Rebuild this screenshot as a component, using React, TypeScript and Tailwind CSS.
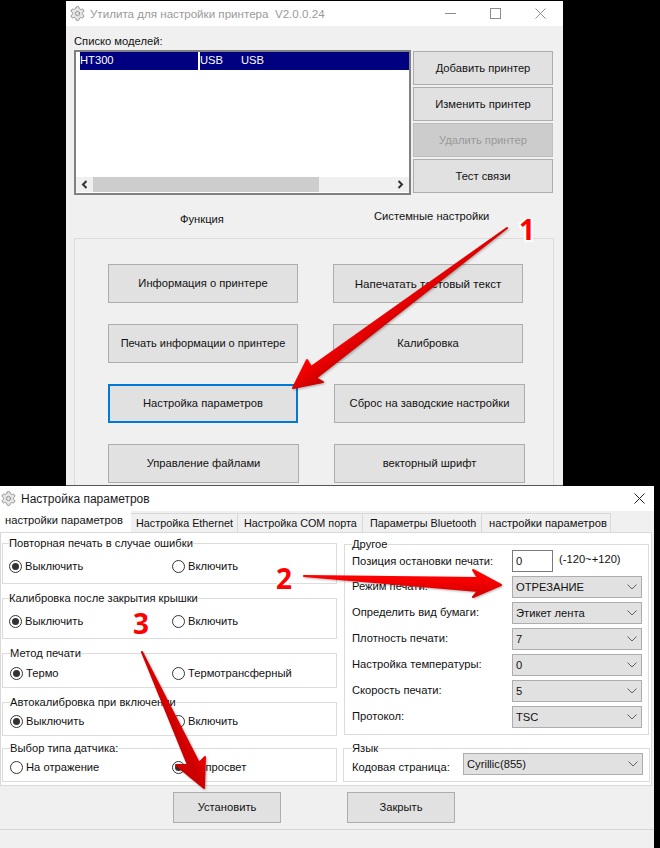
import { Settings } from "lucide-react"

function Chevron() {
  return (
    <svg width="10" height="6" viewBox="0 0 10 6" className="shrink-0">
      <path d="M0.5 0.5 L5 5 L9.5 0.5" fill="none" stroke="#606060" strokeWidth="1" />
    </svg>
  )
}

function WinButton({ children, className = "" }: { children: React.ReactNode; className?: string }) {
  return (
    <button className={`bg-[#e1e1e1] border border-[#adadad] text-[#111] text-[11.2px] whitespace-nowrap flex items-center justify-center ${className}`}>
      {children}
    </button>
  )
}

function Radio({ label, checked = false, className = "" }: { label: string; checked?: boolean; className?: string }) {
  return (
    <div className={`flex items-center gap-[3px] ${className}`}>
      <span className="w-[13px] h-[13px] rounded-full border border-[#333] bg-white flex items-center justify-center shrink-0">
        {checked && <span className="w-[7px] h-[7px] rounded-full bg-[#333]" />}
      </span>
      <span className="leading-[14px]">{label}</span>
    </div>
  )
}

function RadioGroup({
  title,
  left,
  right,
  checkedLeft = true,
  box,
  inset,
}: {
  title: string
  left: string
  right: string
  checkedLeft?: boolean
  box: string
  inset: string
}) {
  const wide = inset.startsWith("pl-[6px]")
  return (
    <fieldset className={`border border-[#dcdcdc] w-[335px] ml-[1px] ${box}`}>
      <legend className={`leading-[14px] ${wide ? "ml-[6px]" : "ml-[7px]"}`}>{title}</legend>
      <div className={`flex ${inset}`}>
        <Radio label={left} checked={checkedLeft} className={wide ? "w-[163px]" : "w-[162px]"} />
        <Radio label={right} checked={!checkedLeft} />
      </div>
    </fieldset>
  )
}

function SelectBox({ value, className = "w-[130px]" }: { value: string; className?: string }) {
  return (
    <div className={`h-[22px] bg-[#e1e1e1] border border-[#adadad] flex items-center justify-between pl-[3px] pr-[4px] ${className}`}>
      <span>{value}</span>
      <Chevron />
    </div>
  )
}

const settingsRows = [
  { label: "Режим печати:", value: "ОТРЕЗАНИЕ" },
  { label: "Определить вид бумаги:", value: "Этикет лента" },
  { label: "Плотность печати:", value: "7" },
  { label: "Настройка температуры:", value: "0" },
  { label: "Скорость печати:", value: "5" },
  { label: "Протокол:", value: "TSC" },
]

export default function App() {
  return (
    <div className="relative w-[660px] h-[848px] bg-black overflow-hidden font-['Liberation_Sans',sans-serif] text-[11.2px] text-[#111]">
      {/* Printer utility window */}
      <div className="ml-[66px] w-[497px] h-[486px] pt-[1px] overflow-hidden border-b border-[#555]">
        <div className="h-[25px] bg-white flex items-center pl-[3px] text-[#9a9a9a]">
          <Settings size={17} strokeWidth={1.3} fill="#e6e6e6" className="text-[#8c8c8c]" />
          <span className="ml-[4px] text-[11.6px] whitespace-nowrap">Утилита для настройки принтера&nbsp;&nbsp;V2.0.0.24</span>
          <div className="ml-auto flex text-[#8c8c8c]">
            <span className="w-[45px] flex justify-center">
              <svg width="11" height="11" viewBox="0 0 11 11"><path d="M0 5.5H11" stroke="currentColor" /></svg>
            </span>
            <span className="w-[45px] flex justify-center">
              <svg width="11" height="11" viewBox="0 0 11 11"><rect x="0.5" y="0.5" width="10" height="10" fill="none" stroke="currentColor" /></svg>
            </span>
            <span className="w-[45px] flex justify-center">
              <svg width="11" height="11" viewBox="0 0 11 11"><path d="M0.5 0.5L10.5 10.5M10.5 0.5L0.5 10.5" stroke="currentColor" /></svg>
            </span>
          </div>
        </div>

        <div className="bg-[#f0f0f0] h-[460px] px-[8px] pt-[8px]">
          <div className="h-[14px] leading-[14px]">Списко моделей:</div>

          <div className="mt-[2px] flex gap-[2px]">
            <div className="w-[337px] h-[145px] border-2 border-[#808080] bg-white flex flex-col justify-between">
              <div className="flex gap-[2px] ml-[4px] h-[18px] text-white leading-[16px]">
                <div className="w-[118px] bg-[#000080]">HT300</div>
                <div className="w-[209px] bg-[#000080]">
                  USB<span className="ml-[18px]">USB</span>
                </div>
              </div>
              <div className="h-[15px] mb-[1px] bg-[#f0f0f0] flex items-center">
                <span className="w-[17px] flex justify-center">
                  <svg width="7" height="9" viewBox="0 0 7 9"><path d="M5.5 1L2 4.5L5.5 8" fill="none" stroke="#333" strokeWidth="2" /></svg>
                </span>
                <div className="w-[226px] h-full bg-[#cdcdcd]" />
                <span className="ml-auto w-[17px] flex justify-center">
                  <svg width="7" height="9" viewBox="0 0 7 9"><path d="M1.5 1L5 4.5L1.5 8" fill="none" stroke="#333" strokeWidth="2" /></svg>
                </span>
              </div>
            </div>

            <div className="w-[140px] mt-[1px] flex flex-col gap-[2px]">
              <WinButton className="h-[34px]">Добавить принтер</WinButton>
              <WinButton className="h-[34px]">Изменить принтер</WinButton>
              <WinButton className="h-[34px] !bg-[#cccccc] !border-[#bfbfbf] !text-[#9a9a9a]">Удалить принтер</WinButton>
              <WinButton className="h-[34px]">Тест связи</WinButton>
            </div>
          </div>

          <div className="h-[43px] flex items-start leading-[14px]">
            <span className="w-[300px] pl-[106px] mt-[17px]">Функция</span>
            <span className="mt-[14px]">Системные настройки</span>
          </div>

          <div className="w-[480px] h-[260px] border border-[#dcdcdc] pt-[25px] pl-[33px] flex flex-col gap-[21px]">
            <div className="flex gap-[35px]">
              <WinButton className="w-[190px] h-[39px]">Информация о принтере</WinButton>
              <WinButton className="w-[190px] h-[39px] !text-[11.6px]">Напечатать тестовый текст</WinButton>
            </div>
            <div className="flex gap-[35px]">
              <WinButton className="w-[190px] h-[39px] !text-[11px]">Печать информации о принтере</WinButton>
              <WinButton className="w-[190px] h-[39px]">Калибровка</WinButton>
            </div>
            <div className="flex gap-[36px]">
              <WinButton className="w-[190px] h-[39px] !border-2 !border-[#0078d7]">Настройка параметров</WinButton>
              <WinButton className="w-[191px] h-[39px]">Сброс на заводские настройки</WinButton>
            </div>
            <div className="flex gap-[35px]">
              <WinButton className="w-[191px] h-[39px]">Управление файлами</WinButton>
              <WinButton className="w-[191px] h-[39px]">векторный шрифт</WinButton>
            </div>
          </div>
        </div>
      </div>

      {/* Parameter settings dialog */}
      <div className="w-[654px] h-[362px] bg-[#f0f0f0]">
        <div className="h-[25px] bg-white flex items-center">
          <Settings size={17} strokeWidth={1.3} fill="#e6e6e6" className="text-[#8c8c8c]" />
          <span className="ml-[4px] text-[#1a1a1a] text-[12px]">Настройка параметров</span>
          <span className="ml-auto w-[30px] flex justify-center">
            <svg width="11" height="11" viewBox="0 0 11 11"><path d="M0.5 0.5L10.5 10.5M10.5 0.5L0.5 10.5" stroke="#222" /></svg>
          </span>
        </div>

        <div className="h-[21px] flex items-end whitespace-nowrap">
          <div className="w-[131px] h-[21px] bg-white pl-[5px] leading-[19px]">настройки параметров</div>
          <div className="w-[107px] h-[19px] border-t border-r border-[#d9d9d9] pl-[5px] leading-[19px] text-[10.8px]">Настройка Ethernet</div>
          <div className="w-[125px] h-[19px] border-t border-r border-[#d9d9d9] pl-[6px] leading-[19px] text-[10.8px]">Настройка COM порта</div>
          <div className="w-[119px] h-[19px] border-t border-r border-[#d9d9d9] pl-[7px] leading-[19px] text-[10.8px]">Параметры Bluetooth</div>
          <div className="w-[129px] h-[19px] border-t border-r border-[#d9d9d9] pl-[7px] leading-[19px]">настройки параметров</div>
        </div>

        <div className="w-[652px] h-[254px] bg-white border border-[#d9d9d9] flex">
          <div className="w-[342px] pt-[3px]">
            <RadioGroup title="Повторная печать в случае ошибки" left="Выключить" right="Включить" box="h-[48px]" inset="pl-[6px] pt-[9px]" />
            <RadioGroup title="Калибровка после закрытия крышки" left="Выключить" right="Включить" box="h-[48px] mt-[7px]" inset="pl-[6px] pt-[9px]" />
            <RadioGroup title="Метод печати" left="Термо" right="Термотрансферный" box="h-[42px] mt-[7px]" inset="pl-[7px] pt-[6px]" />
            <RadioGroup title="Автокалибровка при включении" left="Выключить" right="Включить" box="h-[41px] mt-[7px]" inset="pl-[7px] pt-[5px]" />
            <RadioGroup title="Выбор типа датчика:" left="На отражение" right="На просвет" checkedLeft={false} box="h-[41px] mt-[5px]" inset="pl-[7px] pt-[5px]" />
          </div>

          <div className="w-[307px] pt-[5px]">
            <fieldset className="ml-[1px] w-[305px] h-[197px] border border-[#dcdcdc]">
              <legend className="ml-[7px] leading-[12px]">Другое</legend>
              <div className="pl-[7px] flex flex-col gap-[4px]">
                <div className="flex items-center h-[22px]">
                  <span className="w-[160px]">Позиция остановки печати:</span>
                  <div className="w-[41px] h-[22px] border border-[#7a7a7a] pl-[3px] leading-[20px]">0</div>
                  <span className="ml-[6px] pb-[3px]">(-120~+120)</span>
                </div>
                {settingsRows.map((row) => (
                  <div key={row.label} className="flex items-center h-[22px]">
                    <span className="w-[160px] pb-[2px]">{row.label}</span>
                    <SelectBox value={row.value} />
                  </div>
                ))}
              </div>
            </fieldset>

            <fieldset className="mt-[7px] w-[307px] h-[40px] border border-[#dcdcdc]">
              <legend className="ml-[8px] leading-[12px]">Язык</legend>
              <div className="pl-[8px] -mt-[1px] flex">
                <span className="w-[111px] mt-[7px] leading-[14px]">Кодовая страница:</span>
                <SelectBox value="Cyrillic(855)" className="w-[180px]" />
              </div>
            </fieldset>
          </div>
        </div>

        <div className="h-[44px] border-b border-[#d5d5d5] pt-[6px] pl-[173px] flex gap-[66px]">
          <WinButton className="w-[108px] h-[31px]">Установить</WinButton>
          <WinButton className="w-[108px] h-[31px]">Закрыть</WinButton>
        </div>
      </div>

      {/* Red annotation arrows */}
      <svg width="660" height="848" viewBox="0 0 660 848" className="absolute left-0 top-0 pointer-events-none drop-shadow-[1px_1px_1px_rgba(0,0,0,0.3)]">
        <defs>
          <linearGradient id="arrowA" gradientUnits="userSpaceOnUse" x1="400" y1="290" x2="415" y2="310">
            <stop offset="0" stopColor="#ff0000" />
            <stop offset="1" stopColor="#cc0000" />
          </linearGradient>
          <linearGradient id="arrowB" gradientUnits="userSpaceOnUse" x1="0" y1="576" x2="0" y2="600">
            <stop offset="0" stopColor="#ff0000" />
            <stop offset="1" stopColor="#cc0000" />
          </linearGradient>
          <linearGradient id="arrowC" gradientUnits="userSpaceOnUse" x1="185" y1="700" x2="165" y2="710">
            <stop offset="0" stopColor="#ff0000" />
            <stop offset="1" stopColor="#cc0000" />
          </linearGradient>
        </defs>
        <polygon points="507,228 311,367 307,360 293,388 323,382 316,378" fill="url(#arrowA)" stroke="url(#arrowA)" strokeWidth="2" strokeLinejoin="round" />
        <polygon points="304,576 478,578 473,570 501,585 473,597 478,591" fill="url(#arrowB)" stroke="url(#arrowB)" strokeWidth="2" strokeLinejoin="round" />
        <polygon points="142,652 199,763 205,757 204,788 176,765 188,765" fill="url(#arrowC)" stroke="url(#arrowC)" strokeWidth="2" strokeLinejoin="round" />
      </svg>

      <span className="absolute left-[519px] top-[210px] font-['Open_Sans',sans-serif] font-bold text-[28px] leading-[38px] text-[#f00] [text-shadow:-2px_-1px_0_#fff,2px_-1px_0_#fff,-2px_2px_0_#fff,2px_2px_0_#fff,0_2px_0_#ddd]">1</span>
      <span className="absolute left-[276px] top-[559px] font-['Open_Sans',sans-serif] font-bold text-[28px] leading-[38px] text-[#f00] [text-shadow:-2px_-1px_0_#fff,2px_-1px_0_#fff,-2px_2px_0_#fff,2px_2px_0_#fff,0_2px_0_#ddd]">2</span>
      <span className="absolute left-[133px] top-[604px] font-['Open_Sans',sans-serif] font-bold text-[28px] leading-[38px] text-[#f00] [text-shadow:-2px_-1px_0_#fff,2px_-1px_0_#fff,-2px_2px_0_#fff,2px_2px_0_#fff,0_2px_0_#ddd]">3</span>
    </div>
  )
}
